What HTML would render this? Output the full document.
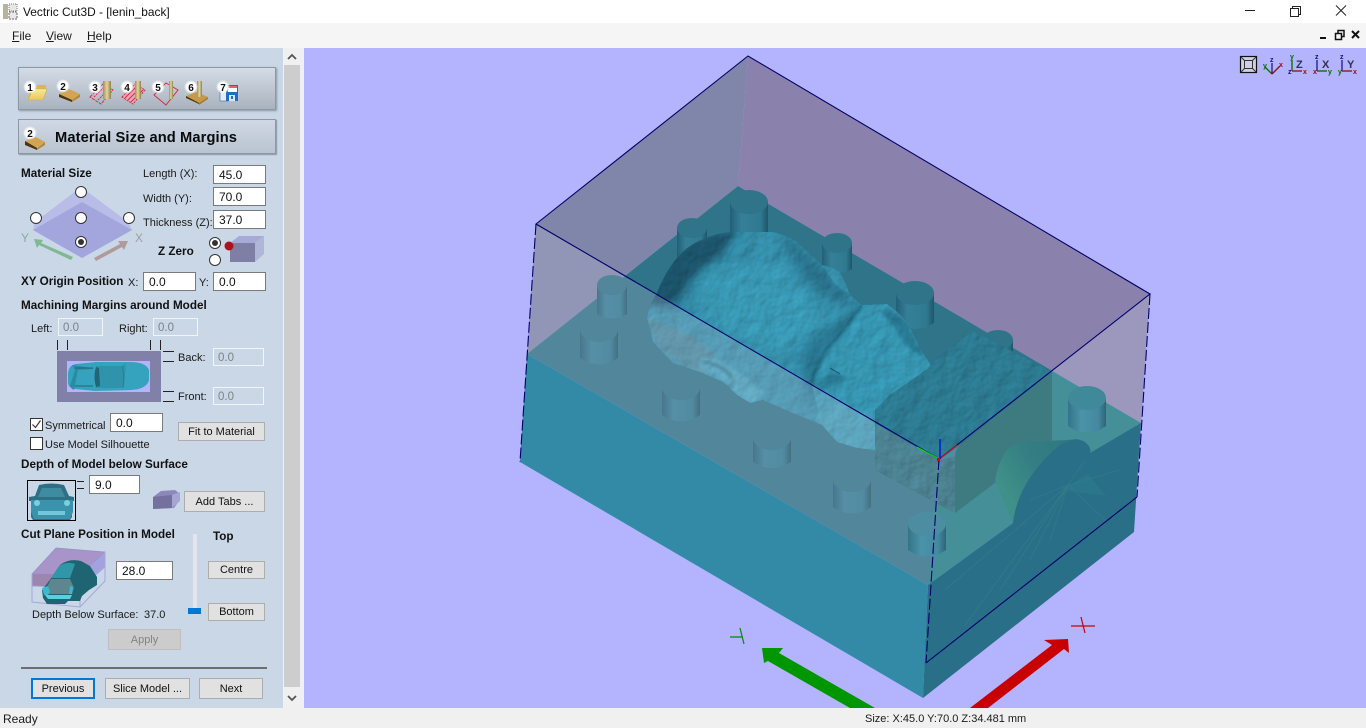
<!DOCTYPE html>
<html><head><meta charset="utf-8"><title>Vectric Cut3D - [lenin_back]</title>
<style>
html,body{margin:0;padding:0;width:1366px;height:728px;overflow:hidden;background:#f0f0f0;font-family:"Liberation Sans",sans-serif;color:#111}
.a{position:absolute}
.t{position:absolute;white-space:nowrap;font-size:11px;line-height:14px;color:#1a1a1a;margin-top:1px}
.b{font-weight:bold;color:#111;font-size:11.700px}
.i{position:absolute;box-sizing:border-box;background:#fff;border:1px solid #7a7a7a;font-size:12px;line-height:17px;padding-left:5px;padding-top:1px;color:#111;height:19px}
.d{background:#c9d7e6;border:1px solid #f0f5fa;color:#7d8288;padding-left:4px;height:18px;font-size:11.500px}
.n{position:absolute;box-sizing:border-box;background:#e1e1e1;border:1px solid #adadad;font-size:11px;text-align:center;color:#111;white-space:nowrap;padding-top:1px}
.r{position:absolute;box-sizing:border-box;width:12px;height:12px;border-radius:50%;background:#fff;border:1px solid #333}
.r.on:after{content:"";position:absolute;left:2px;top:2px;width:6px;height:6px;border-radius:50%;background:#333}
.c{position:absolute;box-sizing:border-box;width:13px;height:13px;background:#fff;border:1px solid #333}
.l{position:absolute;background:#222}
</style></head><body>

<!-- title bar -->
<div class="a" style="left:0;top:0;width:1366px;height:23px;background:#fff"></div>
<svg class="a" style="left:2px;top:3px" width="16" height="17" viewBox="0 0 16 17"><rect x="1" y="1" width="5" height="15" fill="#b9b39a"/><rect x="7" y="1" width="8" height="7" fill="#e8e8e8" stroke="#777" stroke-dasharray="1 1"/><rect x="7" y="9" width="8" height="7" fill="#e8e8e8" stroke="#666" stroke-dasharray="2 1"/></svg>
<div class="t" style="left:23px;top:5px;font-size:11.900px;color:#111;margin-top:0">Vectric Cut3D - [lenin_back]</div>
<svg class="a" style="left:1230px;top:0" width="136" height="23" viewBox="0 0 136 23" fill="none" stroke="#222" stroke-width="1"><path d="M15 10.500H25"/><path d="M60.500 8.500h8v8h-8zM62.500 8.500v-2h8v8h-2"/><path d="M106 5.500l10 10M116 5.500l-10 10"/></svg>

<!-- menu bar -->
<div class="a" style="left:0;top:23px;width:1366px;height:25px;background:#f5f5f5"></div>
<div class="t" style="left:12px;top:29px;font-size:12px;margin-top:0"><u>F</u>ile</div>
<div class="t" style="left:46px;top:29px;font-size:12px;margin-top:0"><u>V</u>iew</div>
<div class="t" style="left:87px;top:29px;font-size:12px;margin-top:0"><u>H</u>elp</div>
<svg class="a" style="left:1316px;top:28px" width="50" height="14" viewBox="0 0 50 14" fill="none" stroke="#111" stroke-width="1.500"><path d="M4 10h6" stroke-width="2"/><path d="M19.500 5.500h6v6h-6zM22 5V2.500h6v6h-2" /><path d="M36 3l7 7M43 3l-7 7" stroke-width="2"/></svg>

<!-- left panel -->
<div class="a" style="left:0;top:48px;width:283px;height:660px;background:#c9d7e6"></div>
<div class="a" style="left:283px;top:48px;width:1px;height:660px;background:#f2f2f2"></div>
<div class="a" style="left:284px;top:48px;width:20px;height:660px;background:#f0f0f0"></div>
<div class="a" style="left:284px;top:65px;width:16px;height:622px;background:#cdcdcd"></div>
<svg class="a" style="left:284px;top:48px" width="16" height="660" viewBox="0 0 16 660" fill="none" stroke="#555" stroke-width="1.800"><path d="M4 11l4-4 4 4M4 648l4 4 4-4"/></svg>

<!-- toolbar -->
<div class="a" style="left:18px;top:67px;width:258px;height:43px;box-sizing:border-box;background:linear-gradient(#d3dce7,#a9b3bd);border:1px solid #8e98a4;box-shadow:1px 1px 2px #8796a6"></div>
<svg class="a" style="left:22px;top:78px" width="225" height="30" viewBox="22 78 225 30">
<defs><radialGradient id="bd"><stop offset=".65" stop-color="#fff"/><stop offset="1" stop-color="#fff" stop-opacity="0"/></radialGradient>
<linearGradient id="fo" x1="0" x2="0" y1="0" y2="1"><stop offset="0" stop-color="#f8ea98"/><stop offset="1" stop-color="#e6c85a"/></linearGradient>
<linearGradient id="go" x1="0" x2="1" y1="0" y2="0"><stop offset="0" stop-color="#9f9060"/><stop offset=".5" stop-color="#e3d59b"/><stop offset="1" stop-color="#8f7f4a"/></linearGradient></defs>
<path d="M28 100l2-13h5l2-2h9v4h-8z" fill="#d9b94e"/><path d="M28 100l5-11h14l-4 11z" fill="url(#fo)" stroke="#d1ae48" stroke-width=".6"/>
<path d="M59 94l10-5 11 5-8 6z" fill="#d3a552"/><path d="M59 94l13 6v2l-13-5z" fill="#4a3418"/><path d="M72 100l8-6v3l-8 5z" fill="#b28738"/>
<path d="M90 97l13-13 10 6-12 14z" fill="none" stroke="#d0304a" stroke-dasharray="3 1"/><path d="M94 97l9-9M98 100l9-9" stroke="#d0304a" stroke-dasharray="2 1"/><rect x="103" y="81" width="8" height="18" fill="url(#go)"/>
<path d="M122 97l13-13 10 6-12 14z" fill="#eba8b4" stroke="#d0304a" stroke-dasharray="2 1"/><path d="M125 98l12-12M128 100l12-12M131 102l12-12" stroke="#d0304a"/><rect x="135" y="81" width="6" height="18" fill="url(#go)"/>
<path d="M154 95l12-12 12 7-12 15z" fill="none" stroke="#d0304a"/><rect x="169" y="81" width="4" height="18" fill="url(#go)"/>
<path d="M186 96l10-4 12 5-9 6z" fill="#c69a48"/><path d="M186 96l13 7v1l-13-6z" fill="#4a3418"/><path d="M199 103l9-6v2l-9 6z" fill="#a87a30"/><rect x="197" y="81" width="5" height="16" fill="url(#go)"/>
<rect x="220" y="85" width="8" height="16" fill="#e4ecf4" stroke="#4068a0" stroke-width=".6"/><rect x="226" y="85" width="12" height="16" fill="#1f6fc0"/><rect x="228" y="86" width="9" height="6" fill="#fff"/><rect x="228" y="86" width="9" height="2" fill="#d66"/><rect x="229" y="95" width="6" height="6" fill="#dde6f0"/><rect x="231" y="96" width="2" height="3" fill="#1f6fc0"/>
<g font-family="Liberation Sans" font-size="10" font-weight="bold" fill="#111" text-anchor="middle">
<circle cx="30" cy="87" r="7" fill="url(#bd)"/><text x="30" y="91">1</text>
<circle cx="63" cy="86" r="7" fill="url(#bd)"/><text x="63" y="90">2</text>
<circle cx="95" cy="87" r="7" fill="url(#bd)"/><text x="95" y="91">3</text>
<circle cx="127" cy="87" r="7" fill="url(#bd)"/><text x="127" y="91">4</text>
<circle cx="158" cy="87" r="7" fill="url(#bd)"/><text x="158" y="91">5</text>
<circle cx="191" cy="87" r="7" fill="url(#bd)"/><text x="191" y="91">6</text>
<circle cx="223" cy="87" r="7" fill="url(#bd)"/><text x="223" y="91">7</text>
</g></svg>

<!-- section title -->
<div class="a" style="left:18px;top:119px;width:258px;height:35px;box-sizing:border-box;background:linear-gradient(#cfd8e4,#bac4d0);border:1px solid #8e98a4;box-shadow:1px 1px 1px #8796a6"></div>
<svg class="a" style="left:22px;top:124px" width="26" height="28" viewBox="22 124 26 28"><path d="M25 141l11-4 9 5-9 6z" fill="#d3a552"/><path d="M25 141l12 7v2l-12-5z" fill="#4a3418"/><path d="M37 148l8-6v3l-8 5z" fill="#b28738"/><circle cx="30" cy="133" r="7" fill="url(#bd)"/><text x="30" y="137" font-family="Liberation Sans" font-size="10" font-weight="bold" text-anchor="middle" fill="#111">2</text></svg>
<div class="t" style="left:55px;top:129px;font-size:14.700px;line-height:16px;font-weight:bold;color:#0a0a0a;letter-spacing:.1px">Material Size and Margins</div>

<!-- material size -->
<div class="t b" style="left:21px;top:166px">Material Size</div>
<svg class="a" style="left:15px;top:180px" width="130" height="82" viewBox="15 180 130 82">
<path d="M81 187l47 35 4 8-50 28-49-28 2-8z" fill="#b8bce6"/>
<path d="M82 202l50 28-50 28-49-28z" fill="#a3a6dc"/>
<text x="25" y="242" font-family="Liberation Sans" font-size="12" fill="#86ad99" text-anchor="middle">Y</text>
<text x="139" y="242" font-family="Liberation Sans" font-size="12" fill="#a39b9e" text-anchor="middle">X</text>
<path d="M34 239l9 1-2 3 32 14-2 3-32-15-2 3z" fill="#7fb892"/>
<path d="M128 241l-10 0 2 3-26 14 2 3 26-14 2 3z" fill="#b09a9c"/>
</svg>
<div class="r" style="left:75px;top:186px"></div>
<div class="r" style="left:30px;top:212px"></div>
<div class="r" style="left:75px;top:212px"></div>
<div class="r" style="left:123px;top:212px"></div>
<div class="r on" style="left:75px;top:236px"></div>
<div class="t" style="left:143px;top:166px">Length (X):</div>
<div class="t" style="left:143px;top:191px">Width (Y):</div>
<div class="t" style="left:143px;top:215px">Thickness (Z):</div>
<div class="i" style="left:213px;top:165px;width:53px">45.0</div>
<div class="i" style="left:213px;top:187px;width:53px">70.0</div>
<div class="i" style="left:213px;top:210px;width:53px">37.0</div>
<div class="t b" style="left:158px;top:244px">Z Zero</div>
<div class="r on" style="left:209px;top:237px"></div>
<div class="r" style="left:209px;top:254px"></div>
<svg class="a" style="left:222px;top:234px" width="44" height="30" viewBox="222 234 44 30"><path d="M230 243h25v19h-25z" fill="#7f7fa6"/><path d="M230 243l9-7h25l-9 7z" fill="#a7a9d8"/><path d="M255 243l9-7v18l-9 8z" fill="#b0b6d8"/><circle cx="229" cy="246" r="4.500" fill="#b01018"/></svg>

<div class="t b" style="left:21px;top:274px">XY Origin Position</div>
<div class="t" style="left:128px;top:275px">X:</div>
<div class="t" style="left:199px;top:275px">Y:</div>
<div class="i" style="left:143px;top:272px;width:53px">0.0</div>
<div class="i" style="left:213px;top:272px;width:53px">0.0</div>

<div class="t b" style="left:21px;top:298px">Machining Margins around Model</div>
<div class="t" style="left:31px;top:321px">Left:</div>
<div class="t" style="left:119px;top:321px">Right:</div>
<div class="i d" style="left:58px;top:318px;width:45px">0.0</div>
<div class="i d" style="left:153px;top:318px;width:45px">0.0</div>
<div class="l" style="left:57px;top:340px;width:1px;height:10px"></div>
<div class="l" style="left:67px;top:340px;width:1px;height:10px"></div>
<div class="l" style="left:150px;top:340px;width:1px;height:10px"></div>
<div class="l" style="left:160px;top:340px;width:1px;height:10px"></div>
<div class="l" style="left:163px;top:351px;width:11px;height:1px"></div>
<div class="l" style="left:163px;top:361px;width:11px;height:1px"></div>
<div class="l" style="left:163px;top:391px;width:11px;height:1px"></div>
<div class="l" style="left:163px;top:401px;width:11px;height:1px"></div>
<svg class="a" style="left:57px;top:351px" width="104" height="51" viewBox="57 351 104 51"><rect x="57" y="351" width="104" height="51" fill="#8080a9"/><rect x="67" y="361" width="83" height="31" fill="#b3b3fe"/>
<path d="M68 373q1-8 8-9l20-2h34q16 0 19 8v10q-2 9-18 10l-36 1-20-2q-7-1-7-7z" fill="#35a3bd"/>
<path d="M72 365l20 3 1 1-15 1-4 20-2-1-2-3 5-16z" fill="#2a7f96" opacity=".7"/><path d="M96 366h26l4-3-2 25h-28z" fill="#2f93ac"/><path d="M96 367q-3 9 0 20l4-1-1-18z" fill="#226478"/><path d="M122 366q3 10 1 21" stroke="#277f97" fill="none"/><path d="M75 368l18 0M75 386l18 0" stroke="#226478" fill="none"/></svg>
<div class="t" style="left:178px;top:350px">Back:</div>
<div class="t" style="left:178px;top:389px">Front:</div>
<div class="i d" style="left:213px;top:348px;width:51px">0.0</div>
<div class="i d" style="left:213px;top:387px;width:51px">0.0</div>

<div class="c" style="left:30px;top:418px"></div>
<svg class="a" style="left:31px;top:419px" width="11" height="11" viewBox="0 0 11 11"><path d="M1.500 5.500l3 3 5-7" fill="none" stroke="#333" stroke-width="1.200"/></svg>
<div class="t" style="left:45px;top:418px">Symmetrical</div>
<div class="i" style="left:110px;top:413px;width:53px">0.0</div>
<div class="n" style="left:178px;top:422px;width:87px;height:19px;line-height:17px">Fit to Material</div>
<div class="c" style="left:30px;top:437px"></div>
<div class="t" style="left:45px;top:437px">Use Model Silhouette</div>

<div class="t b" style="left:21px;top:457px">Depth of Model below Surface</div>
<svg class="a" style="left:27px;top:480px" width="49" height="41" viewBox="27 480 49 41"><rect x="27.500" y="480.500" width="48" height="40" fill="#c9d7e6" stroke="#000"/>
<path d="M29 497l6-1 4-11q12-3 25 0l5 11 5 1v4h-2v16l-2 3H33l-2-3v-16h-2z" fill="#2e6f83"/><path d="M38 497l4-9h19l4 9z" fill="#3f8ca0"/><path d="M31 500h42v12l-3 7H34l-3-7z" fill="#3a93ad"/><circle cx="37" cy="503" r="3" fill="#7bd0e0"/><circle cx="67" cy="503" r="3" fill="#7bd0e0"/><rect x="38" y="511" width="27" height="4" fill="#74c7da"/></svg>
<div class="l" style="left:77px;top:481px;width:7px;height:1px"></div>
<div class="l" style="left:77px;top:488px;width:7px;height:1px"></div>
<div class="i" style="left:89px;top:475px;width:51px">9.0</div>
<svg class="a" style="left:153px;top:488px" width="28" height="23" viewBox="153 488 28 23"><path d="M153 497l8-6 14-1 5 4-1 7-5 7-21 1z" fill="#8b89bb"/><path d="M153 497l19-2v13l-19 1z" fill="#74719f"/><path d="M172 495l8-3v9l-8 7z" fill="#a5a6d5"/></svg>
<div class="n" style="left:184px;top:491px;width:81px;height:21px;line-height:18px">Add Tabs ...</div>

<div class="t b" style="left:21px;top:527px">Cut Plane Position in Model</div>
<div class="t b" style="left:213px;top:529px">Top</div>
<svg class="a" style="left:30px;top:545px" width="78" height="64" viewBox="30 545 78 64">
<path d="M56 548l49 4-25 23-48-1z" fill="#a894c8" stroke="#8e8fc8" stroke-width=".700"/>
<path d="M32 574l48 1v13l-48-2z" fill="#9c86ae"/><path d="M80 575l25-23v15l-25 21z" fill="#a2a2de"/>
<path d="M32 574v28l48 5 25-26v-29M32 586l48 2 25-21M80 575v32" fill="none" stroke="#a6a8dc" stroke-width="1"/>
<path d="M42 590l4-5 6-8 8-12q9-7 21-4l9 5 7 11 0 8-8 5-7 6-2 5-12 0-3 3h-18l-4-6z" fill="#1f6472"/>
<path d="M51 578l8-12q8-5 16-2l-5 14z" fill="#2f97a8"/>
<path d="M46 589l5-10 19 0 4 9-2 6-26 0z" fill="#5d868f"/>
<path d="M42 588l6-2 2 6-2 3h-4zM70 586l3 1-1 7h-3z" fill="#3cb8d0"/><path d="M45 595h27l-2 4H48z" fill="#58d0e0"/>
</svg>
<div class="i" style="left:116px;top:561px;width:57px">28.0</div>
<div class="n" style="left:208px;top:561px;width:57px;height:18px;line-height:15px">Centre</div>
<div class="n" style="left:208px;top:603px;width:57px;height:18px;line-height:15px">Bottom</div>
<div class="a" style="left:193px;top:534px;width:4px;height:78px;background:#e2e6ea"></div>
<div class="a" style="left:188px;top:608px;width:13px;height:6px;background:#0078d7"></div>
<div class="t" style="left:32px;top:607px">Depth Below Surface:</div>
<div class="t" style="left:144px;top:607px">37.0</div>
<div class="n" style="left:108px;top:629px;width:73px;height:21px;line-height:18px;background:#ccc;border-color:#bfbfbf;color:#838383">Apply</div>
<div class="a" style="left:21px;top:667px;width:246px;height:2px;background:#6d6d6d"></div>
<div class="n" style="left:31px;top:678px;width:64px;height:21px;line-height:16px;border:2px solid #0078d7">Previous</div>
<div class="n" style="left:105px;top:678px;width:85px;height:21px;line-height:18px">Slice Model ...</div>
<div class="n" style="left:199px;top:678px;width:64px;height:21px;line-height:18px">Next</div>

<!-- 3D viewport -->
<svg class="a" style="left:304px;top:48px" width="1062" height="660" viewBox="304 48 1062 660">
<defs>
<linearGradient id="cyl" x1="0" x2="1" y1="0" y2="0"><stop offset="0" stop-color="#235f76"/><stop offset=".3" stop-color="#357f98"/><stop offset=".8" stop-color="#2f7a90"/><stop offset="1" stop-color="#1f566a"/></linearGradient>
<linearGradient id="cyl2" x1="0" x2="1" y1="0" y2="0"><stop offset="0" stop-color="#347488"/><stop offset=".35" stop-color="#4a93a8"/><stop offset=".8" stop-color="#45889f"/><stop offset="1" stop-color="#2d6478"/></linearGradient>
<linearGradient id="cone" x1="1000" y1="480" x2="1060" y2="445" gradientUnits="userSpaceOnUse"><stop offset="0" stop-color="#3f9088"/><stop offset=".5" stop-color="#357f84"/><stop offset="1" stop-color="#2f7a80"/></linearGradient>
<filter id="tex" x="0" y="0" width="100%" height="100%" color-interpolation-filters="sRGB"><feTurbulence type="fractalNoise" baseFrequency=".06" numOctaves="3" seed="4" result="n"/><feDiffuseLighting in="n" surfaceScale="1.200" lighting-color="#fff" result="l"><feDistantLight azimuth="225" elevation="62"/></feDiffuseLighting><feComposite in="SourceGraphic" in2="l" operator="arithmetic" k1="1" k2=".08"/></filter>
<filter id="bl"><feGaussianBlur stdDeviation="5"/></filter>
<filter id="bs"><feGaussianBlur stdDeviation="1.500"/></filter>
<clipPath id="vp"><rect x="304" y="48" width="1062" height="660"/></clipPath>
<clipPath id="hd"><path id="hp" d="M647 318Q649 305 657 293Q665 272 677 258Q685 248 697 242Q712 234 730 232L773 232Q787 235 797 242L822 265Q832 266 840 272Q846 283 850 295L862 305L887 304Q898 311 907 322L922 352L932 366L890 395L875 410V450L857 448L837 442L822 425L790 412L763 400L750 403L737 395L723 382L700 372L673 363L653 342z"/></clipPath>
</defs>
<g clip-path="url(#vp)">
<rect x="304" y="48" width="1062" height="660" fill="#b3b3fe"/>
<!-- arrows -->
<path d="M762 648L783 648L779 653L875 708L850 708L768 661L764 663z" fill="#009600"/>
<path d="M1044 640L1068 639L1069 653L1064 649L988 708L970 708L1052 645z" fill="#c80000"/>
<g fill="none" stroke="#008c00" stroke-width="1.200"><path d="M730 637h13M740 628l4 16"/></g>
<g fill="none" stroke="#c80000" stroke-width="1.200"><path d="M1071 626h24M1081 617l4 16"/></g>
<!-- back walls -->
<path d="M536 224L748 56L738 186L527 354z" fill="#7f86aa"/>
<path d="M748 56L1150 294L1141 423L738 186z" fill="#8a82ad"/>
<!-- block -->
<path d="M738 186L1141 423L928 585L527 354z" fill="#2f7489"/>
<!-- pegs -->
<path d="M730 202v32h38v-32z" fill="url(#cyl)"/><ellipse cx="749" cy="202" rx="19" ry="12" fill="#307489"/>
<path d="M677 228v34h30v-34z" fill="url(#cyl)"/><ellipse cx="692" cy="228" rx="15" ry="10" fill="#307489"/>
<path d="M822 243v26q14 10 30 0v-26z" fill="url(#cyl)"/><ellipse cx="837" cy="243" rx="15" ry="10" fill="#307489"/>
<path d="M896 293v30q19 12 38 0v-30z" fill="url(#cyl)"/><ellipse cx="915" cy="293" rx="19" ry="12" fill="#307489"/>
<path d="M597 285v29q15 9 30 0v-29z" fill="url(#cyl)"/><ellipse cx="612" cy="285" rx="15" ry="10" fill="#307489"/>
<path d="M580 330v28q19 13 38 0v-28z" fill="url(#cyl)"/><ellipse cx="599" cy="330" rx="19" ry="12" fill="#307489"/>
<path d="M662 388v27q19 13 38 0v-27z" fill="url(#cyl)"/><ellipse cx="681" cy="388" rx="19" ry="12" fill="#307489"/>
<path d="M753 438v24q19 12 38 0v-24z" fill="url(#cyl)"/><ellipse cx="772" cy="438" rx="19" ry="12" fill="#307489"/>
<path d="M833 480v27q19 13 38 0v-27z" fill="url(#cyl)"/><ellipse cx="852" cy="480" rx="19" ry="12" fill="#307489"/>
<path d="M983 340v20h30v-20z" fill="url(#cyl)"/><ellipse cx="998" cy="340" rx="15" ry="10" fill="#307489"/>
<!-- head -->
<g filter="url(#tex)">
<use href="#hp" fill="#3793b0"/>
<g clip-path="url(#hd)">
<path d="M640 305Q655 250 700 235L740 226L722 256Q692 268 678 306z" fill="#1c566e" filter="url(#bl)"/>
<path d="M780 228L830 275L860 312L815 290L790 255z" fill="#2a7590" filter="url(#bl)"/>
<path d="M705 275L780 262L825 320L780 355L705 320z" fill="#3b9ebb" filter="url(#bl)"/>
<path d="M800 355Q820 330 855 312L875 330L820 385L810 415z" fill="#2b7c98" filter="url(#bl)"/>
<path d="M647 318L690 335L720 360L700 375L660 350z" fill="#478ca2" filter="url(#bs)"/>
<path d="M812 385Q818 355 838 338Q850 322 862 305L887 304L907 322L922 352L932 366L880 405L875 450L857 448L837 442L822 425z" fill="#389bb8"/>
<path d="M888 308L907 322L922 352L930 362L905 345Q895 325 880 312z" fill="#2c7f9a" filter="url(#bs)"/>
<path d="M812 385Q820 352 840 336Q850 322 862 305" fill="none" stroke="#1f6078" stroke-width="2.500" filter="url(#bs)"/>
<path d="M815 395q5-22 22-22l10 6-8 5q-12 0-20 10z" fill="#2a7d98" filter="url(#bs)"/>
<path d="M830 368l10 6" stroke="#1f6078" stroke-width="1.200"/>
<path d="M815 418L830 400L875 415V450L857 448L837 442z" fill="#3fa0bb" filter="url(#bs)"/>
<path d="M700 358Q722 358 738 372Q752 382 764 392L752 404Q740 400 728 384Q715 372 700 372z" fill="#46a6c0" filter="url(#bs)"/>
<path d="M702 362Q720 362 732 378" fill="none" stroke="#1f5c72" stroke-width="1.800" filter="url(#bs)"/>
<path d="M822 265L840 272L850 295L836 285z" fill="#3791ac"/>
</g></g>
<!-- block left side -->
<path d="M527 354L928 585L923 698L520 462z" fill="#338aa6"/>
<!-- front overlays -->
<path d="M536 224L940 458L928 585L527 354z" fill="#dcd2e6" fill-opacity=".2"/>
<path d="M940 458L1150 294L1141 423L928 585z" fill="#e6f0ff" fill-opacity=".2"/>
<!-- shelf right of the dashed edge -->
<path d="M928 585L939 500L955 513L1052 440V372L1141 423L1090 453L1013 523z" fill="#448f98"/>
<path d="M908 524v26q19 13 38 0v-26z" fill="url(#cyl2)"/><ellipse cx="927" cy="524" rx="19" ry="12" fill="#4c8da1"/>
<path d="M1068 398v28q19 13 38 0v-28z" fill="url(#cyl2)"/><ellipse cx="1087" cy="398" rx="19" ry="12" fill="#40899b"/>
<!-- support block -->
<g filter="url(#tex)"><path d="M875 423L939 460L955 457V513L875 470z" fill="#4f8797"/></g>
<path d="M955 513L1052 440V372L960 445Q955 450 955 457z" fill="#3e7b80"/>
<g filter="url(#tex)"><path d="M875 410L890 395L927 370L932 362L970 332H975L1052 372L960 445L939 460L875 423z" fill="#2e7f97"/></g>
<!-- cone -->
<path d="M995 480Q999 460 1007 450Q1014 443 1023 442L1067 440L1077 439Q1090 443 1090 453L1050 470L1013 523z" fill="url(#cone)"/>
<!-- fan face and right side -->
<path d="M928 585L1013 523Q1018 480 1060 445Q1075 436 1085 442Q1092 448 1090 453L1141 423L1134 532L923 698z" fill="#286f87"/>
<g stroke="#3a818a" stroke-width=".9" opacity=".55" fill="none"><path d="M1068 485L965 625M1068 485L1000 590M1068 485L945 590M1068 485L1030 560M1068 485L1120 470M1068 485L1105 520M1068 485L1050 540M1068 485L1030 500M1068 485L1085 460"/></g>
<path d="M1062 490l26-16 18 22-30-4z" fill="#2e7c8c" opacity=".6"/>
<!-- lines -->
<g fill="none" stroke="#00006e" stroke-width="1.100">
<path d="M536 224L748 56L1150 294L939 459L536 224z"/>
<path d="M926 663L1137 497"/>
<path d="M536 224L520 462M939 459L926 663M1150 294L1137 497" stroke-dasharray="11 3"/>
</g>
<path d="M917 447L939 459" stroke="#00e000" stroke-width="1.200"/><path d="M939 459L957 445" stroke="#e00000" stroke-width="1"/><path d="M940 459V439" stroke="#0000e0" stroke-width="1.200"/><rect x="937" y="458" width="3" height="3" fill="#e00000"/>
<!-- view icons -->
<g fill="none"><rect x="1240.500" y="56.500" width="16" height="16" fill="#cfcfe8" stroke="#111" stroke-width="1.200"/><rect x="1244.500" y="60.500" width="8" height="8" stroke="#333"/><path d="M1241 57l4 4M1256 57l-4 4M1241 72l4-4M1256 72l-4-4" stroke="#333"/></g>
<g font-family="Liberation Sans" font-weight="bold" font-size="7">
<path d="M1272 74l-7-7" fill="none" stroke="#006a00" stroke-width="1.300"/><path d="M1272 74V63" stroke="#1a1a90" stroke-width="1.300"/><path d="M1272 74l8-8" stroke="#8c1010" fill="none" stroke-width="1.300"/>
<text x="1270" y="62" fill="#101080">z</text><text x="1263" y="68" fill="#006a00">y</text><text x="1279" y="67" fill="#8c1010">x</text>
<path d="M1292 71V60" stroke="#006a00" stroke-width="1.300"/><path d="M1292 71h10" stroke="#8c1010" stroke-width="1.300"/><text x="1290" y="59" fill="#006a00">y</text><text x="1288" y="74" fill="#101080">z</text><text x="1303" y="74" fill="#8c1010">x</text><text x="1296" y="68" fill="#33334d" font-size="11">Z</text>
<path d="M1317 71V60" stroke="#1a1a90" stroke-width="1.300"/><path d="M1317 71h10" stroke="#006a00" stroke-width="1.300"/><text x="1315" y="59" fill="#101080">z</text><text x="1313" y="74" fill="#8c1010">x</text><text x="1328" y="74" fill="#006a00">y</text><text x="1322" y="68" fill="#33334d" font-size="11">X</text>
<path d="M1342 71V60" stroke="#1a1a90" stroke-width="1.300"/><path d="M1342 71h10" stroke="#8c1010" stroke-width="1.300"/><text x="1340" y="59" fill="#101080">z</text><text x="1338" y="74" fill="#006a00">y</text><text x="1353" y="74" fill="#8c1010">x</text><text x="1347" y="68" fill="#33334d" font-size="11">Y</text>
</g>
</g></svg>

<!-- status bar -->
<div class="a" style="left:0;top:708px;width:1366px;height:20px;background:#f0f0f0"></div>
<div class="t" style="left:3px;top:711px;font-size:12px">Ready</div>
<div class="t" style="left:865px;top:711px">Size: X:45.0 Y:70.0 Z:34.481 mm</div>
</body></html>
